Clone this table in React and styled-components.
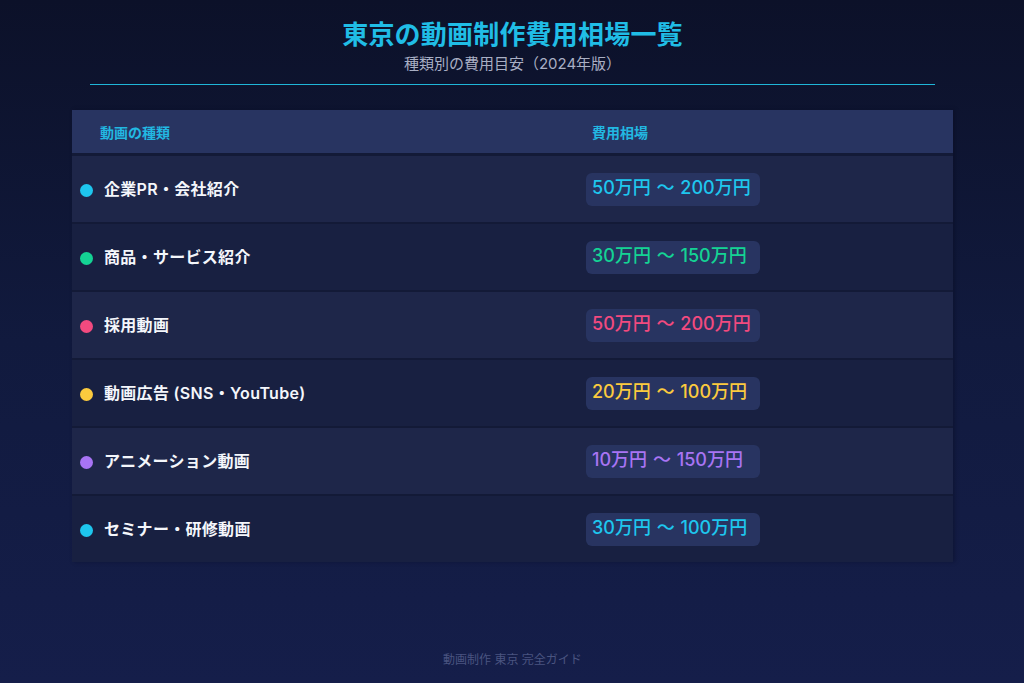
import React from "react"
import styled, { createGlobalStyle } from "styled-components"

const GlobalStyle = createGlobalStyle`
  html, body {
    margin: 0;
    padding: 0;
  }
  body {
    font-family: "Inter", "Noto Sans CJK JP", sans-serif;
    background: linear-gradient(180deg, #0c1129 0%, #111a3e 50%, #151e4a 100%);
    min-height: 100vh;
  }
`

const rows = [
  { name: "企業PR・会社紹介", price: "50万円 〜 200万円", color: "#1ec6ee" },
  { name: "商品・サービス紹介", price: "30万円 〜 150万円", color: "#14d394" },
  { name: "採用動画", price: "50万円 〜 200万円", color: "#f24a7f" },
  { name: "動画広告 (SNS・YouTube)", price: "20万円 〜 100万円", color: "#fbca3e" },
  { name: "アニメーション動画", price: "10万円 〜 150万円", color: "#a874f4" },
  { name: "セミナー・研修動画", price: "30万円 〜 100万円", color: "#1ec6ee" },
]

export default function App() {
  return (
    <>
      <GlobalStyle />
      <Page>
        <Head>
          <Title>東京の動画制作費用相場一覧</Title>
          <Subtitle>種類別の費用目安（2024年版）</Subtitle>
        </Head>

        <Table>
          <HeadRow>
            <HeadCell>動画の種類</HeadCell>
            <HeadCell>費用相場</HeadCell>
          </HeadRow>
          {rows.map((row, i) => (
            <Row key={i} alt={i % 2 === 1} last={i === rows.length - 1}>
              <NameCell>
                <Dot color={row.color} />
                <span>{row.name}</span>
              </NameCell>
              <PriceCell>
                <Pill color={row.color}>{row.price}</Pill>
              </PriceCell>
            </Row>
          ))}
        </Table>

        <Footer>動画制作 東京 完全ガイド</Footer>
      </Page>
    </>
  )
}

const Page = styled.div`
  min-height: 100vh;
  box-sizing: border-box;
  display: flex;
  flex-direction: column;
  padding: 19px 71px 16px 72px;
`

const Head = styled.div`
  margin: 0 18px;
  text-align: center;
  border-bottom: 1px solid #1fb6d8;
  padding-bottom: 10px;
`

const Title = styled.h1`
  margin: 0;
  font-size: 26px;
  line-height: 32px;
  font-weight: 700;
  color: #20bde6;
  letter-spacing: 0.2px;
`

const Subtitle = styled.p`
  margin: 3px 0 0;
  font-size: 15px;
  line-height: 20px;
  color: #a9afc4;
`

const Table = styled.div`
  margin-top: 25px;
  display: flex;
  flex-direction: column;
  box-shadow: 2px 0 4px rgba(5, 10, 30, 0.35);
`

const HeadRow = styled.div`
  display: grid;
  grid-template-columns: 492px 1fr;
  height: 43px;
  align-items: center;
  background: #283461;
  border-bottom: 3px solid #131a37;
`

const HeadCell = styled.div`
  padding-left: 28px;
  font-size: 14px;
  font-weight: 700;
  color: #22b8e2;
`

const Row = styled.div`
  display: grid;
  grid-template-columns: 492px 1fr;
  height: 66px;
  align-items: center;
  background: ${({ alt }) => (alt ? "#182041" : "#1e2649")};
  border-bottom: ${({ last }) => (last ? "none" : "2px solid #131a37")};
`

const NameCell = styled.div`
  display: flex;
  align-items: center;
  gap: 11px;
  padding-left: 8px;
  font-size: 16px;
  font-weight: 600;
  color: #f4f6fb;

  span{
    margin-top: -3px;
    letter-spacing: 0.3px;
  }
`

const Dot = styled.i`
  width: 13px;
  height: 13px;
  border-radius: 50%;
  background: ${({ color }) => color};
  flex-shrink: 0;
  margin-top: 3px;
`

const PriceCell = styled.div`
  padding-left: 22px;
  padding-top: 1px;
`

const Pill = styled.span`
  display: inline-block;
  box-sizing: border-box;
  width: 174px;
  padding: 0 6px;
  height: 33px;
  line-height: 30px;
  border-radius: 6px;
  background: #283461;
  font-size: 18px;
  font-weight: 500;
  word-spacing: 1px;
  color: ${({ color }) => color};
`

const Footer = styled.div`
  margin-top: auto;
  text-align: center;
  font-size: 12px;
  color: #4a5480;
`
